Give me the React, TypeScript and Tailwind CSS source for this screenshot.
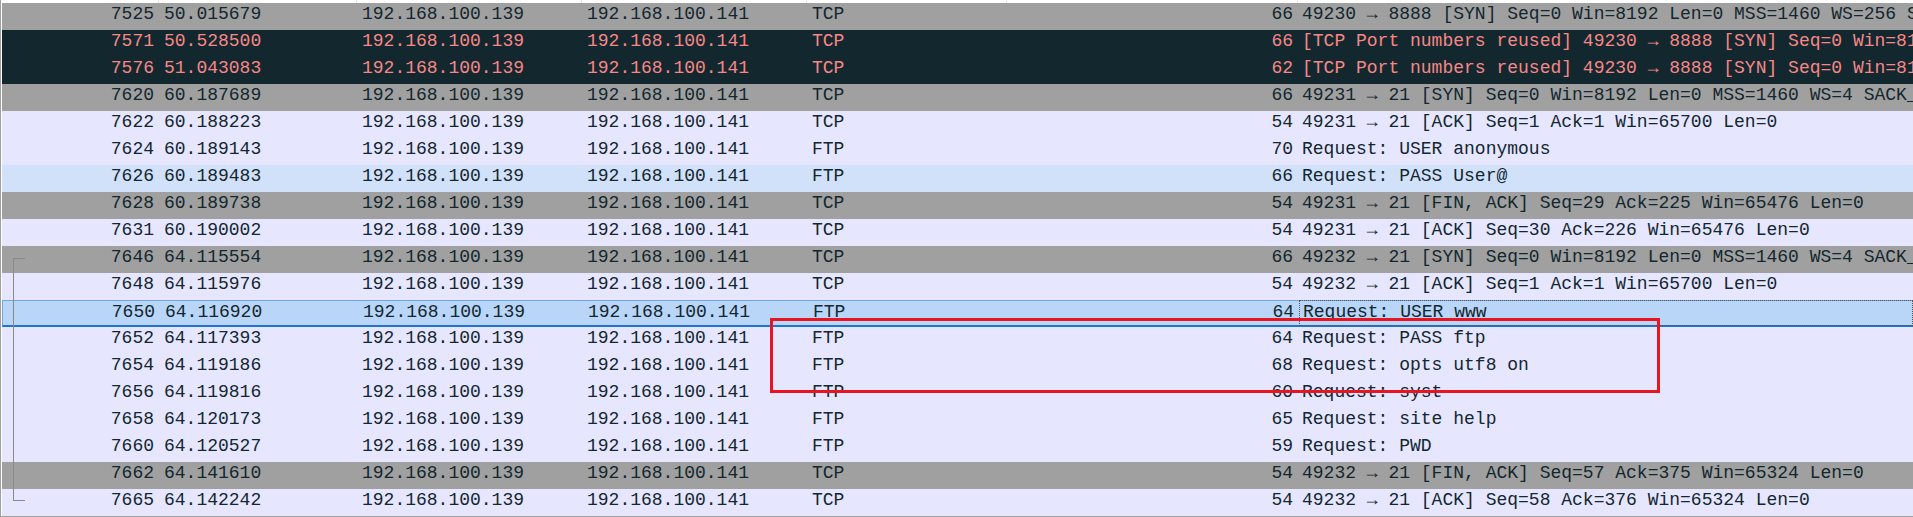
type Kind = "gray" | "bad" | "normal" | "hover" | "selected"

type Packet = {
  no: string
  time: string
  proto: string
  len: string
  info: string
  kind: Kind
}

const SRC = "192.168.100.139"
const DST = "192.168.100.141"

const packets: Packet[] = [
  { no: "7525", time: "50.015679", proto: "TCP", len: "66", info: "49230 → 8888 [SYN] Seq=0 Win=8192 Len=0 MSS=1460 WS=256 SACK_PERM", kind: "gray" },
  { no: "7571", time: "50.528500", proto: "TCP", len: "66", info: "[TCP Port numbers reused] 49230 → 8888 [SYN] Seq=0 Win=8192 Len=0 MSS=1460 WS=256 SACK_PERM", kind: "bad" },
  { no: "7576", time: "51.043083", proto: "TCP", len: "62", info: "[TCP Port numbers reused] 49230 → 8888 [SYN] Seq=0 Win=8192 Len=0 MSS=1460 SACK_PERM", kind: "bad" },
  { no: "7620", time: "60.187689", proto: "TCP", len: "66", info: "49231 → 21 [SYN] Seq=0 Win=8192 Len=0 MSS=1460 WS=4 SACK_PERM", kind: "gray" },
  { no: "7622", time: "60.188223", proto: "TCP", len: "54", info: "49231 → 21 [ACK] Seq=1 Ack=1 Win=65700 Len=0", kind: "normal" },
  { no: "7624", time: "60.189143", proto: "FTP", len: "70", info: "Request: USER anonymous", kind: "normal" },
  { no: "7626", time: "60.189483", proto: "FTP", len: "66", info: "Request: PASS User@", kind: "hover" },
  { no: "7628", time: "60.189738", proto: "TCP", len: "54", info: "49231 → 21 [FIN, ACK] Seq=29 Ack=225 Win=65476 Len=0", kind: "gray" },
  { no: "7631", time: "60.190002", proto: "TCP", len: "54", info: "49231 → 21 [ACK] Seq=30 Ack=226 Win=65476 Len=0", kind: "normal" },
  { no: "7646", time: "64.115554", proto: "TCP", len: "66", info: "49232 → 21 [SYN] Seq=0 Win=8192 Len=0 MSS=1460 WS=4 SACK_PERM", kind: "gray" },
  { no: "7648", time: "64.115976", proto: "TCP", len: "54", info: "49232 → 21 [ACK] Seq=1 Ack=1 Win=65700 Len=0", kind: "normal" },
  { no: "7650", time: "64.116920", proto: "FTP", len: "64", info: "Request: USER www", kind: "selected" },
  { no: "7652", time: "64.117393", proto: "FTP", len: "64", info: "Request: PASS ftp", kind: "normal" },
  { no: "7654", time: "64.119186", proto: "FTP", len: "68", info: "Request: opts utf8 on", kind: "normal" },
  { no: "7656", time: "64.119816", proto: "FTP", len: "60", info: "Request: syst", kind: "normal" },
  { no: "7658", time: "64.120173", proto: "FTP", len: "65", info: "Request: site help", kind: "normal" },
  { no: "7660", time: "64.120527", proto: "FTP", len: "59", info: "Request: PWD", kind: "normal" },
  { no: "7662", time: "64.141610", proto: "TCP", len: "54", info: "49232 → 21 [FIN, ACK] Seq=57 Ack=375 Win=65324 Len=0", kind: "gray" },
  { no: "7665", time: "64.142242", proto: "TCP", len: "54", info: "49232 → 21 [ACK] Seq=58 Ack=376 Win=65324 Len=0", kind: "normal" },
]

const rowStyle: Record<Kind, string> = {
  gray: "bg-[#a0a0a0] text-[#12272e]",
  bad: "bg-[#12272e] text-[#f78787]",
  normal: "bg-[#e7e6ff] text-[#12272e]",
  hover: "bg-[#d2e1fa] text-[#12272e]",
  selected: "bg-[#b9d5f8] text-[#12272e] border-t border-l border-[#6ea6e6] border-b-2 border-b-[#1f74d1]",
}

function Row({ p }: { p: Packet }) {
  return (
    <div className={`flex h-[27px] leading-[22px] whitespace-nowrap ${rowStyle[p.kind]}`}>
      <div className="w-[157px] shrink-0 pr-[5px] text-right">{p.no}</div>
      <div className="w-[198px] shrink-0 pl-[5px]">{p.time}</div>
      <div className="w-[225px] shrink-0 pl-[5px]">{SRC}</div>
      <div className="w-[225px] shrink-0 pl-[5px]">{DST}</div>
      <div className="w-[200px] shrink-0 pl-[5px]">{p.proto}</div>
      <div className="w-[291px] shrink-0 pr-[5px] text-right">{p.len}</div>
      <div
        className={
          p.kind === "selected"
            ? "min-w-0 flex-1 overflow-hidden pl-[3px] -my-px border border-dotted border-[#555]"
            : "min-w-0 flex-1 overflow-hidden pl-[4px]"
        }
      >
        {p.info}
      </div>
    </div>
  )
}

export default function App() {
  return (
    <div className="relative h-[517px] w-[1913px] overflow-hidden bg-white font-['Liberation_Mono','DejaVu_Sans_Mono',monospace] text-[18px]">
      {/* header remnant with column dividers */}
      <div className="flex h-[3px] border-l border-[#a0a0a0] bg-white pl-px">
        <div className="w-[157px] shrink-0 border-r border-[#e5e5e5]" />
        <div className="w-[198px] shrink-0 border-r border-[#e5e5e5]" />
        <div className="w-[225px] shrink-0 border-r border-[#e5e5e5]" />
        <div className="w-[225px] shrink-0 border-r border-[#e5e5e5]" />
        <div className="w-[200px] shrink-0 border-r border-[#e5e5e5]" />
        <div className="w-[291px] shrink-0 border-r border-[#e5e5e5]" />
        <div className="flex-1" />
      </div>

      <div className="flex flex-col border-l border-[#a0a0a0] bg-white pl-px">
        {packets.map((p) => (
          <Row key={p.no} p={p} />
        ))}
      </div>
      <div className="h-[2px] bg-[#a0a0a0]" />

      {/* related packets bracket */}
      <div className="absolute left-[13px] top-[258px] h-[243px] w-[12px] border-l border-t border-b border-[#8a8a8a]" />

      {/* red annotation box */}
      <div className="absolute left-[770px] top-[318px] h-[75px] w-[890px] border-[3px] border-[#e8141f]" />
    </div>
  )
}
